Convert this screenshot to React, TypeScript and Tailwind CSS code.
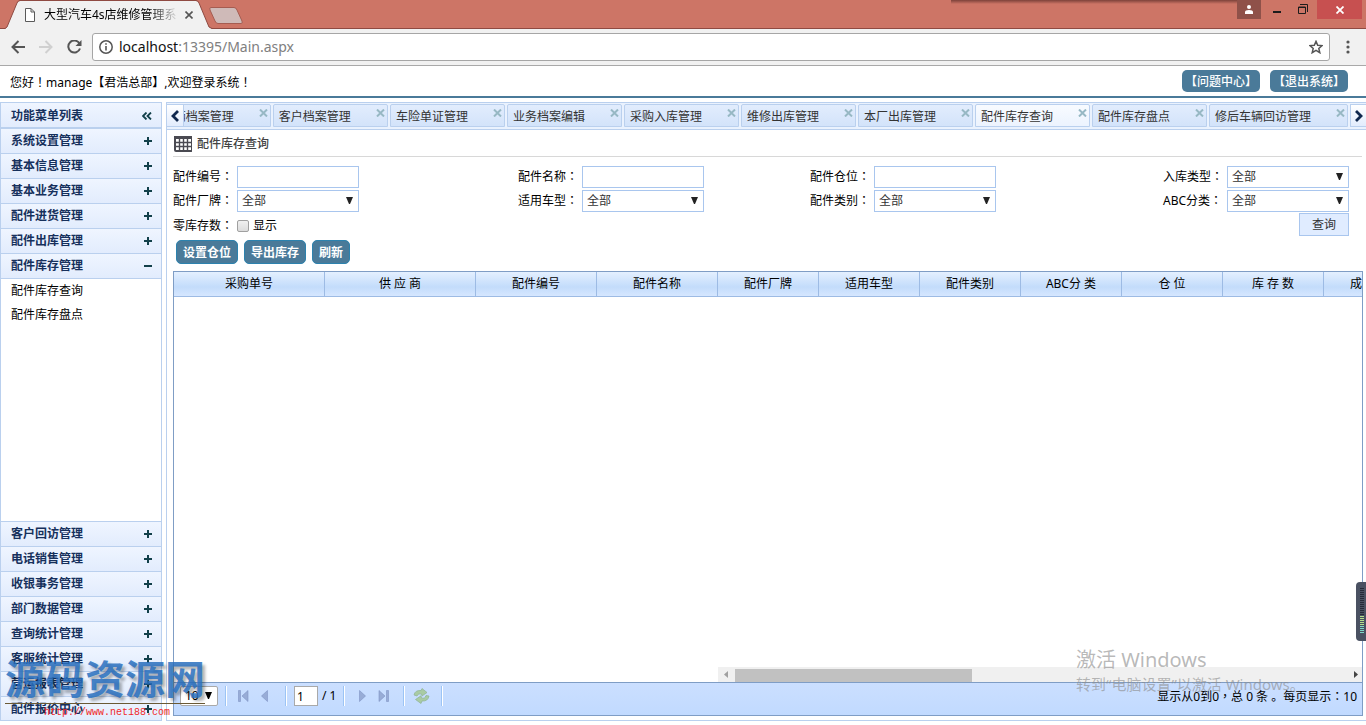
import { useState } from 'react'
import clsx from 'clsx'

const upperMenus = ['系统设置管理', '基本信息管理', '基本业务管理', '配件进货管理', '配件出库管理', '配件库存管理']
const lowerMenus = [
  '客户回访管理',
  '电话销售管理',
  '收银事务管理',
  '部门数据管理',
  '查询统计管理',
  '客服统计管理',
  '营运报表管理',
  '配件报价中心',
]

const tabs = [
  '车辆档案管理',
  '客户档案管理',
  '车险单证管理',
  '业务档案编辑',
  '采购入库管理',
  '维修出库管理',
  '本厂出库管理',
  '配件库存查询',
  '配件库存盘点',
  '修后车辆回访管理',
]

const columns = [
  { label: '采购单号', width: 151 },
  { label: '供 应 商', width: 151 },
  { label: '配件编号', width: 121 },
  { label: '配件名称', width: 121 },
  { label: '配件厂牌', width: 101 },
  { label: '适用车型', width: 101 },
  { label: '配件类别', width: 101 },
  { label: 'ABC分 类', width: 101 },
  { label: '仓 位', width: 101 },
  { label: '库 存 数', width: 101 },
  { label: '成本单价', width: 101 },
]

// Full-width punctuation with the mark centred in its cell
function Mark({ children }: { children: string }) {
  return <span className="font-['Noto_Sans_CJK_TC',sans-serif]">{children}</span>
}

function BrowserChrome() {
  return (
    <div className="shrink-0">
      <div className="relative flex h-[29px] items-start border-b border-[#8f4a42] bg-[#cd7566]">
        <div className="relative ml-[5px] h-[29px] w-[208px]">
          <svg className="absolute inset-0" width="208" height="29" viewBox="0 0 208 29">
            <path d="M0 29 L2 27 L12 3 Q13 1 15 1 H191 Q193 1 194 3 L204 27 L207 29 Z" fill="#f1f1f1" />
            <path d="M0 28.5 L2 27 L12 3 Q13 .5 15 .5 H191 Q193 .5 194 3 L204 27 L207 28.5" fill="none" stroke="#8f4a42" />
          </svg>
          <div className="relative flex h-[29px] items-center pl-5">
            <svg width="10" height="14" viewBox="0 0 10 14" fill="#fff" stroke="#5a5a5a">
              <path d="M.5 .5 H6 L9.5 4 V13.5 H.5 Z M6 .5 V4 H9.5" />
            </svg>
            <span className="ml-[9px] w-[132px] overflow-hidden whitespace-nowrap bg-linear-to-r from-black from-80% to-black/10 bg-clip-text text-xs text-transparent">
              大型汽车4s店维修管理系统
            </span>
            <button aria-label="关闭标签页" className="ml-[9px]">
              <svg width="8" height="8" viewBox="0 0 8 8" stroke="#555" strokeWidth="1.6">
                <path d="M.5 .5 L7.5 7.5 M7.5 .5 L.5 7.5" />
              </svg>
            </button>
          </div>
        </div>
        <button aria-label="打开新的标签页" className="-ml-1 mt-[7px]">
          <svg width="34" height="17" viewBox="0 0 34 17">
            <path d="M2 .5 H25 Q27 .5 28 3 L33 14 Q34 16.5 32 16.5 H9 Q7 16.5 6 14 L1 3 Q0 .5 2 .5 Z" fill="#cfbab8" stroke="#a55c51" />
          </svg>
        </button>
        <div className="ml-auto flex items-start pr-1">
          <div className="h-1 w-[286px] bg-linear-to-b from-[#7d423a] to-transparent" />
          <button aria-label="用户" className="flex h-[19px] w-6 items-center justify-center bg-[#8f5149]">
            <svg width="8" height="9" viewBox="0 0 8 9" fill="#fff">
              <circle cx="4" cy="2" r="2" />
              <path d="M0 9 V7 Q0 5 4 5 Q8 5 8 7 V9 Z" />
            </svg>
          </button>
          <button aria-label="最小化" className="ml-3 pt-[11px]">
            <svg width="8" height="2" viewBox="0 0 8 2">
              <path d="M0 1 H8" stroke="#1c1c1c" strokeWidth="2" />
            </svg>
          </button>
          <button aria-label="还原" className="ml-[17px] pt-1">
            <svg width="10" height="10" viewBox="0 0 10 10" fill="none" stroke="#1c1c1c">
              <path d="M2 .5 H9.5 V8" />
              <path d="M.5 3 H7.5 V9.5 H.5 Z M.5 3.5 H7.5" />
            </svg>
          </button>
          <button aria-label="关闭" className="ml-[9px] flex h-[19px] w-[45px] items-center justify-center bg-[#c75050]">
            <svg width="8" height="8" viewBox="0 0 8 8" stroke="#fff" strokeWidth="1.8">
              <path d="M.5 .5 L7.5 7.5 M7.5 .5 L.5 7.5" />
            </svg>
          </button>
        </div>
      </div>

      <div className="flex h-[37px] items-center border-b border-[#a9a9a9] bg-[#f1f1f1] pl-[11px]">
        <button aria-label="后退">
          <svg width="14" height="14" viewBox="0 0 14 14" fill="none" stroke="#555" strokeWidth="2">
            <path d="M14 7 H1.5 M7.5 1 L1.5 7 L7.5 13" />
          </svg>
        </button>
        <button aria-label="前进" className="ml-[14px]">
          <svg width="14" height="14" viewBox="0 0 14 14" fill="none" stroke="#d0d0d0" strokeWidth="2">
            <path d="M0 7 H12.5 M6.5 1 L12.5 7 L6.5 13" />
          </svg>
        </button>
        <button aria-label="重新加载" className="ml-[14px]">
          <svg width="15" height="14" viewBox="0 0 15 14" fill="none" stroke="#555" strokeWidth="2">
            <path d="M12.5 3.5 A6 6 0 1 0 13 8.5" />
            <path d="M14.5 0 V6 H8.5 Z" fill="#555" stroke="none" />
          </svg>
        </button>
        <div className="ml-[10px] flex h-7 flex-1 items-center rounded-[3px] border border-[#a6a6a6] bg-white px-[6px]">
          <svg width="14" height="14" viewBox="0 0 14 14" fill="none" stroke="#555">
            <circle cx="7" cy="7" r="6.2" strokeWidth="1.5" />
            <path d="M7 6 V10.5 M7 3.2 V4.8" strokeWidth="1.6" />
          </svg>
          <span className="ml-[6px] text-sm text-[#808080]">
            <span className="text-[#111]">localhost</span>:13395/Main.aspx
          </span>
          <button aria-label="加入书签" className="ml-auto">
            <svg width="14" height="14" viewBox="0 0 14 14" fill="none" stroke="#555" strokeWidth="1.5">
              <path d="M7 1.4 L8.7 5.3 L13 5.6 L9.8 8.4 L10.8 12.7 L7 10.4 L3.2 12.7 L4.2 8.4 L1 5.6 L5.3 5.3 Z" />
            </svg>
          </button>
        </div>
        <button aria-label="菜单" className="mr-4 ml-4">
          <svg width="4" height="14" viewBox="0 0 4 14" fill="#555">
            <circle cx="2" cy="2" r="1.6" />
            <circle cx="2" cy="7" r="1.6" />
            <circle cx="2" cy="12" r="1.6" />
          </svg>
        </button>
      </div>
    </div>
  )
}

function MenuItem({ label, open }: { label: string; open?: boolean }) {
  return (
    <button className="flex h-[25px] w-full shrink-0 items-center justify-between border-b border-[#bad0ee] bg-linear-to-b from-[#eff5ff] to-[#e2ecfd] pr-[9px] pl-[10px] font-bold text-[#16305c] last:h-6">
      {label}
      <svg width="8" height="8" viewBox="0 0 8 8" stroke="#12404a" strokeWidth="2">
        <path d={open ? 'M0 4 H8' : 'M0 4 H8 M4 0 V8'} />
      </svg>
    </button>
  )
}

function Sidebar() {
  return (
    <nav className="flex w-[162px] shrink-0 flex-col border border-b-0 border-[#bad0ee]">
      <div className="flex h-[26px] shrink-0 items-center justify-between border-b-2 border-[#bad0ee] bg-linear-to-b from-[#eff5ff] to-[#e2ecfd] pt-px pr-[9px] pl-[10px] font-bold text-[#16305c]">
        功能菜单列表
        <button aria-label="收起菜单">
          <svg width="10" height="8" viewBox="0 0 10 8" fill="none" stroke="#12404a" strokeWidth="1.8">
            <path d="M4.5 .5 L1 4 L4.5 7.5 M9 .5 L5.5 4 L9 7.5" />
          </svg>
        </button>
      </div>
      {upperMenus.map((m) => (
        <MenuItem key={m} label={m} open={m === '配件库存管理'} />
      ))}
      <div className="flex min-h-0 flex-1 flex-col border-b border-[#bad0ee] pl-[10px] text-black">
        <a href="#query" className="leading-6">配件库存查询</a>
        <a href="#check" className="leading-6">配件库存盘点</a>
      </div>
      {lowerMenus.map((m) => (
        <MenuItem key={m} label={m} />
      ))}
    </nav>
  )
}

function TabStrip() {
  const [active, setActive] = useState('配件库存查询')

  return (
    <div className="flex h-[27px] shrink-0 items-start border-b border-[#bad0ee] bg-[#eaf2fe] pt-px">
      <button aria-label="向左滚动" className="flex h-[23px] w-[17px] shrink-0 items-center justify-center border border-l-0 border-[#bad0ee] bg-linear-to-b from-white to-[#e2ecfd]">
        <svg width="8" height="12" viewBox="0 0 8 12" fill="none" stroke="#10284e" strokeWidth="2.8">
          <path d="M7 1 L2 6 L7 11" />
        </svg>
      </button>
      <div className="flex min-w-0 flex-1 justify-end gap-[2px] overflow-hidden pr-[2px]">
        {tabs.map((t) => (
          <div
            key={t}
            className={clsx(
              'flex h-[23px] shrink-0 rounded-t-[2px] border border-[#bad0ee] pr-[2px] pl-[5px]',
              active === t
                ? 'bg-linear-to-b from-[#f8fbff] to-[#ecf3fe]'
                : 'bg-linear-to-b from-[#e2edfd] to-[#d3e3fa]',
            )}
          >
            <button onClick={() => setActive(t)} className="leading-[23px] whitespace-nowrap text-[#333]">
              {t}
            </button>
            <button aria-label={`关闭${t}`} className="ml-[25px] self-start pt-1">
              <svg width="9" height="8" viewBox="0 0 9 8" stroke="#97b8c4" strokeWidth="2">
                <path d="M1 .5 L8 7.5 M8 .5 L1 7.5" />
              </svg>
            </button>
          </div>
        ))}
      </div>
      <button aria-label="向右滚动" className="flex h-[23px] w-4 shrink-0 items-center justify-center border border-r-0 border-[#bad0ee] bg-linear-to-b from-white to-[#e2ecfd]">
        <svg width="8" height="12" viewBox="0 0 8 12" fill="none" stroke="#10284e" strokeWidth="2.8">
          <path d="M1 1 L6 6 L1 11" />
        </svg>
      </button>
    </div>
  )
}

function TextField({ id, label }: { id: string; label: string }) {
  return (
    <div className="flex h-6 items-center">
      <label htmlFor={id} className="w-16 pb-px">
        {label}
        <Mark>：</Mark>
      </label>
      <input id={id} type="text" className="h-[22px] w-[122px] border border-[#a9c6ee] bg-white px-1 outline-none" />
    </div>
  )
}

function SelectField({ id, label }: { id: string; label: string }) {
  return (
    <div className="flex h-6 items-center">
      <label htmlFor={id} className="w-16 pb-px">
        {label}
        <Mark>：</Mark>
      </label>
      <div className="relative">
        <select id={id} className="block h-[22px] w-[122px] appearance-none border border-[#a9c6ee] bg-white px-1 text-[#333] outline-none">
          <option>全部</option>
        </select>
        <svg className="pointer-events-none absolute top-[7px] right-[6px]" width="7" height="7" viewBox="0 0 7 7" fill="#222">
          <path d="M0 0 H7 L4 7 H3 Z" />
        </svg>
      </div>
    </div>
  )
}

function FilterForm() {
  return (
    <form className="pt-2" onSubmit={(e) => e.preventDefault()}>
      <div className="grid grid-cols-[345fr_292fr_353fr_203fr]">
        <TextField id="partNo" label="配件编号" />
        <TextField id="partName" label="配件名称" />
        <TextField id="location" label="配件仓位" />
        <SelectField id="inType" label="入库类型" />
        <SelectField id="brand" label="配件厂牌" />
        <SelectField id="model" label="适用车型" />
        <SelectField id="category" label="配件类别" />
        <SelectField id="abc" label="ABC分类" />
      </div>
      <div className="flex h-[25px] items-center pr-[17px]">
        <span className="w-16">
          零库存数
          <Mark>：</Mark>
        </span>
        <label className="flex items-center gap-1">
          <input type="checkbox" className="size-3 appearance-none rounded-[2px] border border-[#a0a0a0] bg-linear-to-b from-[#f0f0f0] to-[#dcdcdc]" />
          显示
        </label>
        <button type="submit" className="mb-[2px] ml-auto h-[23px] w-[50px] border border-[#a9c6ee] bg-[#e0ecff] text-[#333]">
          查询
        </button>
      </div>
      <div className="flex gap-[6px] pt-[2px] pb-[7px] pl-[3px]">
        {['设置仓位', '导出库存', '刷新'].map((b) => (
          <button key={b} type="button" className="h-6 rounded-[5px] border border-[#2c82ae] bg-[#4a7a99] px-[6px] pt-px font-bold text-white">
            {b}
          </button>
        ))}
      </div>
    </form>
  )
}

function Divider() {
  return <div className="h-5 w-[2px] border-l border-[#9cc4f5] bg-white" />
}

function Pager() {
  return (
    <div className="flex h-[33px] shrink-0 items-start border-t border-[#7f9dc5] bg-linear-to-b from-[#cbdfff] to-[#c1daff] pt-[3px] pl-[6px]">
      <div className="relative">
        <select aria-label="每页条数" className="block h-5 w-[38px] appearance-none rounded-[2px] border border-[#a9a9a9] bg-white pl-1 text-black outline-none">
          <option>10</option>
        </select>
        <svg className="pointer-events-none absolute top-[6px] right-[6px]" width="7" height="7" viewBox="0 0 7 7">
          <path d="M0 0 H7 L4 7 H3 Z" />
        </svg>
      </div>
      <div className="ml-[7px] flex h-5 items-center">
        <Divider />
        <button aria-label="首页" className="ml-[11px]">
          <svg width="11" height="12" viewBox="0 0 11 12" fill="#98acd6" stroke="#7f94c4" strokeWidth=".6">
            <path d="M.5 .5 H2.5 V11.5 H.5 Z M10 .5 V11.5 L4 6 Z" />
          </svg>
        </button>
        <button aria-label="上一页" className="ml-3">
          <svg width="7" height="12" viewBox="0 0 7 12" fill="#98acd6" stroke="#7f94c4" strokeWidth=".6">
            <path d="M6.5 .5 V11.5 L.5 6 Z" />
          </svg>
        </button>
        <div className="mr-[7px] ml-[17px] flex">
          <Divider />
        </div>
        <input aria-label="页码" defaultValue="1" className="h-5 w-6 border border-[#a9a9a9] bg-white pl-[2px] text-black outline-none" />
        <span className="mr-[7px] ml-1 text-black">/ 1</span>
        <Divider />
        <button aria-label="下一页" className="ml-[14px]">
          <svg width="7" height="12" viewBox="0 0 7 12" fill="#98acd6" stroke="#7f94c4" strokeWidth=".6">
            <path d="M.5 .5 V11.5 L6.5 6 Z" />
          </svg>
        </button>
        <button aria-label="末页" className="mr-[14px] ml-3">
          <svg width="11" height="12" viewBox="0 0 11 12" fill="#98acd6" stroke="#7f94c4" strokeWidth=".6">
            <path d="M1 .5 V11.5 L7 6 Z M8.5 .5 H10.5 V11.5 H8.5 Z" />
          </svg>
        </button>
        <Divider />
        <button aria-label="刷新列表" className="mr-[11px] ml-2">
          <svg width="17" height="16" viewBox="0 0 17 16" fill="#a9cba4" stroke="#8fb392" strokeWidth=".7">
            <path d="M1 7 Q2 2 8 2.5 L9 .5 L14 4.5 L9 8 L8.5 6 Q5 5 4 8 Z" />
            <path d="M16 8 Q15 13.5 9 13 L8 15.5 L2.5 11.5 L8 7.8 L8.5 10 Q12 11 13 7.5 Z" />
          </svg>
        </button>
        <Divider />
      </div>
      <span className="mr-[5px] ml-auto leading-5 whitespace-nowrap text-black">
        显示从0到0<Mark>，</Mark>总 0 条 。每页显示<Mark>：</Mark>10
      </span>
    </div>
  )
}

function StockGrid() {
  return (
    <div className="mr-[3px] mb-[4px] flex min-h-0 flex-1 flex-col border border-[#7f9dc5]">
      <div className="min-h-0 flex-1 overflow-hidden">
        <table className="w-[1251px] table-fixed border-separate border-spacing-0">
          <thead>
            <tr className="h-[25px] bg-linear-to-b from-[#e4f0ff] via-[#c3dcfb] via-60% to-[#d8e8ff]">
              {columns.map((c) => (
                <th key={c.label} style={{ width: c.width }} className="border-r border-b border-[#9dbbe4] p-0 font-normal text-black">
                  {c.label}
                </th>
              ))}
            </tr>
          </thead>
        </table>
      </div>
      <div className="ml-auto flex h-[15px] w-[644px] shrink-0 items-center bg-[#f0f0f0] pr-1 pl-[6px]">
        <svg width="4" height="7" viewBox="0 0 4 7" fill="#a0a0a0">
          <path d="M4 0 V7 L0 3.5 Z" />
        </svg>
        <div className="mt-[2px] ml-[7px] h-[13px] w-[237px] bg-[#c1c1c1]" />
        <svg className="ml-auto" width="4" height="7" viewBox="0 0 4 7" fill="#444">
          <path d="M0 0 V7 L4 3.5 Z" />
        </svg>
      </div>
      <Pager />
    </div>
  )
}

export default function App() {
  return (
    <div className="relative flex h-screen flex-col overflow-hidden bg-white pb-1 font-['Noto_Sans','Noto_Sans_CJK_SC',sans-serif] text-xs text-black">
      <BrowserChrome />

      <header className="flex h-8 shrink-0 items-center border-b-2 border-[#4a7a99] pr-[18px] pl-[10px]">
        <span className="pt-[2px]">
          您好<Mark>！</Mark>manage【君浩总部】,欢迎登录系统<Mark>！</Mark>
        </span>
        <div className="ml-auto flex gap-[10px]">
          {['【问题中心】', '【退出系统】'].map((b) => (
            <button key={b} className="h-[22px] w-[78px] rounded-[5px] bg-[#4a7a99] pt-px font-medium whitespace-nowrap text-white">
              {b}
            </button>
          ))}
        </div>
      </header>

      <div className="flex min-h-0 flex-1 gap-1 pt-1">
        <Sidebar />
        <main className="flex min-w-0 flex-1 flex-col border-t border-b border-l border-[#bad0ee]">
          <TabStrip />
          <section className="flex min-h-0 flex-1 flex-col pl-[6px]">
            <h1 className="mr-1 flex h-[27px] shrink-0 items-center border-b border-[#d8d8d8] pt-px font-medium text-[#444]">
              <svg className="mr-[5px] ml-px" width="18" height="16" viewBox="0 0 18 16" fill="none" stroke="#4a4a52">
                <rect x="1" y="1" width="17" height="14" rx="1" strokeWidth="2" />
                <path d="M0 1.5 H18" strokeWidth="3" />
                <path d="M0 6.5 H18 M0 10.5 H18 M5.5 1 V15 M9.5 1 V15 M13.5 1 V15" strokeWidth="1.4" />
              </svg>
              配件库存查询
            </h1>
            <FilterForm />
            <StockGrid />
          </section>
        </main>
      </div>

      {/* Floating meter on the right edge */}
      <div className="absolute top-[582px] right-0 h-[59px] w-[10px] rounded-l-[4px] bg-[#4a5162]">
        <svg className="mt-[6px] ml-1" width="4" height="46" viewBox="0 0 4 46">
          <path d="M2 0 V28" stroke="#252a38" strokeWidth="4" strokeDasharray="1 1" />
          <path d="M2 28 V38" stroke="#b4e08c" strokeWidth="4" strokeDasharray="1 1" />
          <path d="M2 38 V46" stroke="#7fd8c8" strokeWidth="4" strokeDasharray="1 1" />
        </svg>
      </div>

      {/* Windows activation notice */}
      <div className="pointer-events-none absolute right-[66px] bottom-[29px] w-[224px] whitespace-nowrap text-[#8a8a8a]/60">
        <div className="text-xl leading-6">激活 Windows</div>
        <div className="text-[15px] leading-6">转到“电脑设置”以激活 Windows。</div>
      </div>

      {/* Site watermark */}
      <div className="pointer-events-none absolute bottom-1 left-[5px] w-[200px]">
        <div className="border-b border-[#6b5a35] text-[40px] leading-[48px] font-bold text-[#2a70bf]/85 [text-shadow:3px_3px_3px_rgba(0,0,0,0.3)]">
          源码资源网
        </div>
        <div className="pt-px pl-[39px] font-['Liberation_Mono',monospace] text-[10px] leading-4 text-[#f02828]">http://www.net188.com</div>
      </div>
    </div>
  )
}
